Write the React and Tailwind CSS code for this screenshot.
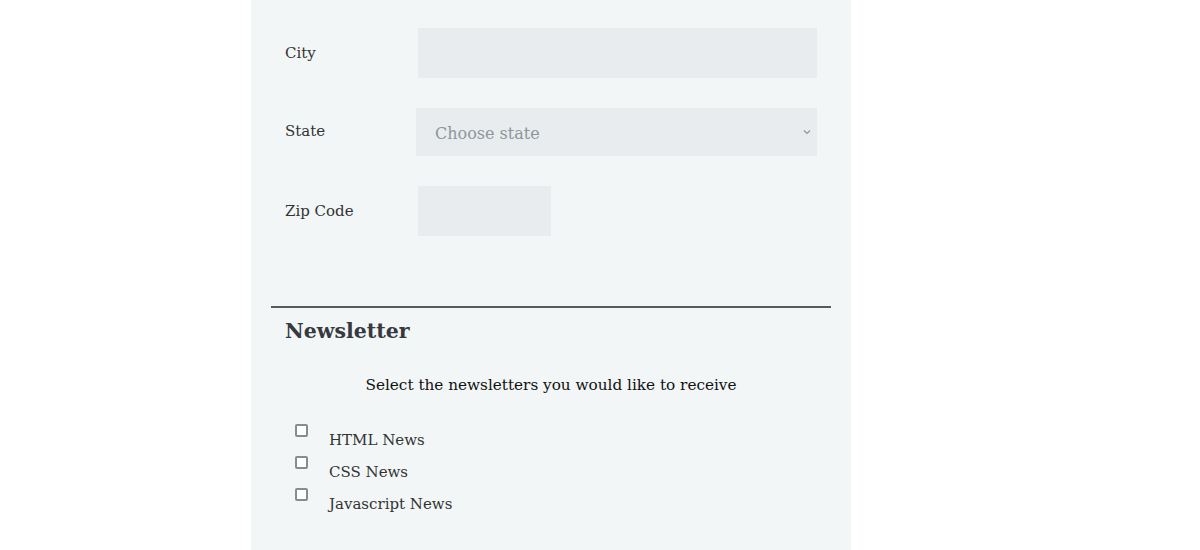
export default function App() {
  return (
    <div className="flex h-[550px] w-[1200px] bg-white">
      <div className="ml-[251px] w-[600px] bg-[#f2f6f7] pt-[28px] font-['DejaVu_Serif',serif] text-[#333]">
        {/* Address rows */}
        <div className="flex h-[50px] items-center px-[34px]">
          <label className="w-[133px] text-[15px]">City</label>
          <input type="text" className="h-[50px] w-[399px] bg-[#e8ecee] outline-none" />
        </div>
        <div className="mt-[30px] flex h-[48px] items-center pl-[34px]">
          <label className="w-[131px] -translate-y-[1px] text-[15px]">State</label>
          <div className="relative h-[48px] w-[401px] bg-[#e8ecee]">
            <span className="absolute left-[19px] top-[14px] text-[16px] text-[#8f969b]">Choose state</span>
            <svg className="absolute right-[5px] top-[20px] h-[8px] w-[10px]" viewBox="0 0 10 8" fill="none" stroke="#8f969b" strokeWidth="1.2">
              <path d="M2 2.5l3 3 3-3" />
            </svg>
          </div>
        </div>
        <div className="mt-[30px] flex h-[50px] items-center px-[34px]">
          <label className="w-[133px] text-[15px]">Zip Code</label>
          <input type="text" className="h-[50px] w-[133px] bg-[#e8ecee] outline-none" />
        </div>

        {/* Newsletter */}
        <div className="mx-[20px] mt-[70px] border-t-2 border-[#5a5a5a]" />
        <h2 className="mt-[8px] pl-[34px] text-[20.5px] font-bold leading-[30px] text-[#363a3e]">Newsletter</h2>
        <p className="mt-[29px] text-center text-[15.25px] leading-[20px] text-[#111]">
          Select the newsletters you would like to receive
        </p>
        <div className="mt-[28px] flex flex-col gap-[12px] pl-[44px]">
          {['HTML News', 'CSS News', 'Javascript News'].map((n) => (
            <label key={n} className="flex h-[20px] items-start">
              <span className="mt-[1px] h-[13px] w-[13px] rounded-[2px] border-2 border-[#8a8a93] bg-white" />
              <span className="ml-[21px] mt-[7px] text-[15px] leading-[20px] text-[#333]">{n}</span>
            </label>
          ))}
        </div>
      </div>
    </div>
  )
}
